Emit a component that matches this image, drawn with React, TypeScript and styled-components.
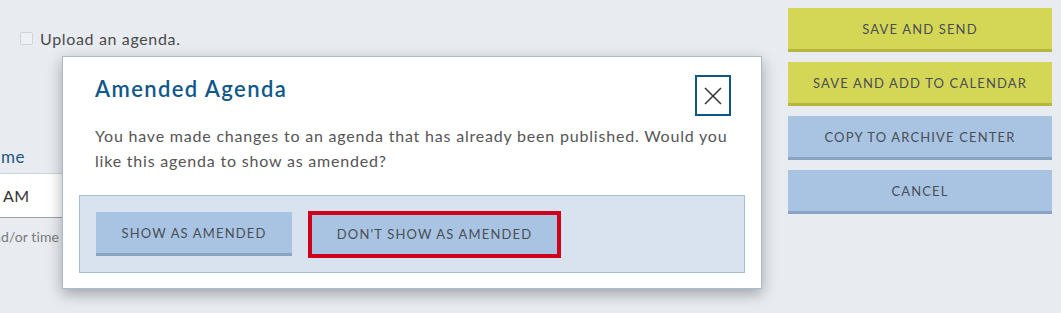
import React from "react";
import styled, { createGlobalStyle } from "styled-components";

const Global = createGlobalStyle`
  html, body {
    margin: 0;
    padding: 0;
    background: #e8ecf1;
    overflow: hidden;
  }
  body {
    font-family: "Lato", "Noto Sans", sans-serif;
    color: #4a4a4a;
  }
  * { box-sizing: border-box; }
`;

const Page = styled.div`
  width: 1061px;
  height: 313px;
  display: flex;
  background: #e8ecf1;
`;

const Main = styled.div`
  position: relative;
  flex: 1;
  display: flex;
  flex-direction: column;
`;

const UploadRow = styled.label`
  display: flex;
  align-items: center;
  gap: 7px;
  height: 24px;
  margin-top: 26px;
  padding-left: 20px;
  font-size: 16px;
  letter-spacing: 0.65px;
  color: #4a4a4a;
`;

const Check = styled.span`
  width: 13px;
  height: 13px;
  border: 1px solid #cfd4da;
  border-radius: 2px;
  background: #eef1f4;
`;

const Field = styled.div`
  display: flex;
  flex-direction: column;
  margin-top: 95px;
  width: 62px;
`;

/* the part of a text that runs off the left edge of the window */
const Lead = styled.span`
  width: 0;
  display: flex;
  justify-content: flex-end;
  white-space: nowrap;
`;

const Label = styled.div`
  display: flex;
  white-space: nowrap;
  height: 24px;
  line-height: 24px;
  padding-left: 1px;
  font-size: 17px;
  letter-spacing: 0.5px;
  color: #1f5580;
`;

const Input = styled.div`
  margin-top: 4px;
  height: 45px;
  width: 80px;
  padding-left: 3px;
  background: #ffffff;
  border-top: 1px solid #cdd3da;
  border-bottom: 1px solid #9aa3ad;
  display: flex;
  align-items: center;
  white-space: nowrap;
  font-size: 16px;
  letter-spacing: 0.3px;
  color: #333;
`;

const Help = styled.div`
  display: flex;
  white-space: nowrap;
  margin-top: 9px;
  height: 20px;
  line-height: 20px;
  padding-left: 1px;
  font-size: 14px;
  letter-spacing: 0.1px;
  color: #7a7a7a;
`;

const Modal = styled.div`
  position: absolute;
  left: 62px;
  top: 56px;
  width: 700px;
  height: 233px;
  background: #ffffff;
  border: 1px solid #a9bcd2;
  box-shadow: 0 5px 14px rgba(0, 0, 0, 0.32);
  display: flex;
  flex-direction: column;
`;

const Header = styled.div`
  display: flex;
  justify-content: space-between;
  align-items: flex-start;
  padding: 18px 30px 0 32px;
`;

const Title = styled.h2`
  margin: 1px 0 0;
  font-size: 22px;
  line-height: 26px;
  font-weight: 600;
  letter-spacing: 1.4px;
  color: #10588a;
`;

const Close = styled.button`
  width: 36px;
  height: 41px;
  padding: 0;
  border: 2px solid #0f5687;
  background: #ffffff;
  display: flex;
  align-items: center;
  justify-content: center;
  cursor: pointer;
`;

const Body = styled.p`
  margin: 7px 0 0;
  padding: 0 27px 0 32px;
  font-size: 16px;
  line-height: 25px;
  letter-spacing: 0.8px;
  color: #555555;
`;

const Footer = styled.div`
  margin: auto 16px 15px;
  height: 78px;
  background: #d9e3ef;
  border: 1px solid #a9bdd3;
  display: flex;
  align-items: center;
  gap: 16px;
  padding: 0 16px;
`;

const Btn = styled.button<{ $tone: "blue" | "yellow"; $focus?: boolean }>`
  font-family: "Lato", "Noto Sans", sans-serif;
  font-size: 13px;
  font-weight: 400;
  letter-spacing: 1.15px;
  white-space: nowrap;
  text-transform: uppercase;
  color: #4a4e55;
  cursor: pointer;
  height: ${(p) => (p.$focus ? "47px" : "44px")};
  padding: 0;
  background: ${(p) => (p.$tone === "yellow" ? "#d4d655" : "#a8c4e2")};
  border: none;
  border-bottom: 3px solid ${(p) => (p.$tone === "yellow" ? "#b4b63e" : "#88a3c4")};
  ${(p) => (p.$focus ? "border: 4px solid #d0021b;" : "")}
`;

const ModalBtn = styled(Btn)`
  width: ${(p) => (p.$focus ? "253px" : "196px")};
`;

const Sidebar = styled.div`
  width: 264px;
  margin-right: 9px;
  padding-top: 8px;
  display: flex;
  flex-direction: column;
  gap: 10px;
`;

const SideBtn = styled(Btn)`
  width: 100%;
`;

export default function App() {
  return (
    <>
      <Global />
      <Page>
        <Main>
          <UploadRow>
            <Check />
            Upload an agenda.
          </UploadRow>
          <Field>
            <Label>
              <Lead>Start Ti</Lead>
              <span>me</span>
            </Label>
            <Input>
              <Lead>10:00&nbsp;</Lead>
              <span>AM</span>
            </Input>
            <Help>
              <Lead>Enter a date an</Lead>
              <span>d/or time</span>
            </Help>
          </Field>
          <Modal role="dialog" aria-label="Amended Agenda">
            <Header>
              <Title>Amended Agenda</Title>
              <Close aria-label="Close">
                <svg width="18" height="18" viewBox="0 0 18 18">
                  <path d="M1 1 L17 17 M17 1 L1 17" stroke="#333" strokeWidth="1.5" fill="none" />
                </svg>
              </Close>
            </Header>
            <Body>
              You have made changes to an agenda that has already been published. Would you like this agenda to show as amended?
            </Body>
            <Footer>
              <ModalBtn $tone="blue">Show as amended</ModalBtn>
              <ModalBtn $tone="blue" $focus>
                Don't show as amended
              </ModalBtn>
            </Footer>
          </Modal>
        </Main>
        <Sidebar>
          <SideBtn $tone="yellow">Save and send</SideBtn>
          <SideBtn $tone="yellow">Save and add to calendar</SideBtn>
          <SideBtn $tone="blue">Copy to archive center</SideBtn>
          <SideBtn $tone="blue">Cancel</SideBtn>
        </Sidebar>
      </Page>
    </>
  );
}
